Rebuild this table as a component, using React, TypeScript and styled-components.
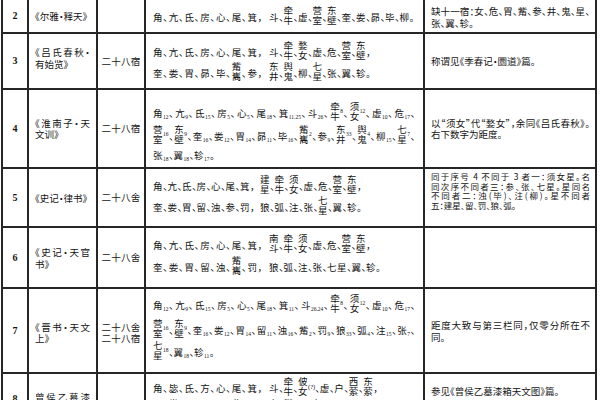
import React from 'react'
import styled, {createGlobalStyle} from 'styled-components'

const GlobalStyle = createGlobalStyle`
  html, body {
    margin: 0;
    padding: 0;
    background: #fff;
    overflow: hidden;
  }
  body {
    font-family: "Noto Sans CJK SC", "Noto Sans", sans-serif;
    color: #141414;
    font-feature-settings: "halt";
  }
`

type Txt = { t: string, j?: boolean }
type ListLineSpec = { mt?: number, left?: string, lw?: number, gap?: number, right?: string, full?: string }
type RowSpec = {
    no: string
    noPt?: number
    book: Txt[]
    bookPt?: number
    bookLh?: number
    name: string[]
    namePt?: number
    listPt: number
    lines: ListLineSpec[]
    note: Txt[]
    notePt?: number
    noteLh?: number
    noteFs?: number
}

const LEFT_A = "角、亢、氐、房、心、尾、箕，"

const rows: RowSpec[] = [
    {
        no: "2",
        book: [{t: "《尔雅·释天》"}],
        name: [],
        listPt: 4,
        lines: [
            {left: LEFT_A, right: "斗、[牵牛]、虚、[营室]、[东壁]、奎、娄、昴、毕、柳。"},
        ],
        note: [{t: "缺十一宿：女、危、胃、觜、参、井、鬼、星、", j: true}, {t: "张、翼、轸。"}],
        notePt: 6,
        noteLh: 11.5,
    },
    {
        no: "3",
        book: [{t: "《吕氏春秋·", j: true}, {t: "有始览》"}],
        bookPt: 12,
        name: ["二十八宿"],
        listPt: 5,
        lines: [
            {left: LEFT_A, right: "斗、[牵牛]、[婺女]、虚、危、[营室]、[东壁]，"},
            {mt: 3, left: "奎、娄、胃、昴、毕、[觜巂]、参，", right: "[东井]、[舆鬼]、柳、[七星]、张、翼、轸。"},
        ],
        note: [{t: "称谓见《季春记·圜道》篇。"}],
    },
    {
        no: "4",
        book: [{t: "《淮南子·天", j: true}, {t: "文训》"}],
        bookLh: 11,
        name: ["二十八宿"],
        listPt: 10,
        lines: [
            {full: "角_12、亢_9、氐_15、房_5、心_5、尾_18、箕_11.25、斗_26、[牵牛]^8、[须女]^12、虚_10、危_17、"},
            {mt: 5, full: "[营室]^16、[东壁]^9、奎_16、娄_12、胃_14、昴_11、毕_16、[觜巂]^2、参_9、[东井]^33、[舆鬼]^4、柳_15、[七星]^7、"},
            {mt: 1, right: "张_18、翼_18、轸_17。"},
        ],
        note: [{t: "以“须女”代“婺女”，余同《吕氏春秋》。", j: true}, {t: "右下数字为距度。"}],
        noteLh: 11,
    },
    {
        no: "5",
        book: [{t: "《史记·律书》"}],
        name: ["二十八舍"],
        listPt: 4,
        lines: [
            {left: LEFT_A, lw: 97, gap: 10, right: "[建星]、[牵牛]、[须女]、虚、危、[营室]、[东壁]，"},
            {mt: 3, left: "奎、娄、胃、留、浊、参、罚，", lw: 97, gap: 10, right: "狼、弧、注、张、[七星]、翼、轸。"},
        ],
        note: [
            {t: "同于序号 4 不同于 3 者一：须女星。名", j: true},
            {t: "同次序不同者三：参、张、七星。星同名", j: true},
            {t: "不同者二：浊(毕)、注(柳)。星不同者", j: true},
            {t: "五：建星、留、罚、狼、弧。"},
        ],
        notePt: 3,
        noteLh: 9.5,
        noteFs: 8.5,
    },
    {
        no: "6",
        book: [{t: "《史记·天官", j: true}, {t: "书》"}],
        name: ["二十八舍"],
        listPt: 4,
        lines: [
            {left: LEFT_A, right: "[南斗]、[牵牛]、[须女]、虚、危、[营室]、[东壁]，"},
            {mt: 4, left: "奎、娄、胃、留、浊、[觜巂]、罚，", right: "狼、弧、注、张、七星、翼、轸。"},
        ],
        note: [],
    },
    {
        no: "7",
        book: [{t: "《晋书·天文", j: true}, {t: "上》"}],
        bookPt: 33,
        bookLh: 11,
        name: ["二十八舍", "二十八宿"],
        namePt: 33,
        listPt: 3,
        lines: [
            {full: "角_12、亢_9、氐_15、房_5、心_5、尾_18、箕_11、斗_26.24、[牵牛]^8、[须女]^12、虚_10、危_17、"},
            {mt: 7, full: "[营室]^16、[东壁]^9、奎_16、娄_12、胃_14、留_11、浊_16、觜_2、罚_9、狼_33、弧_4、注_15、张_7、"},
            {mt: 4, right: "[七星]^18、翼_18、轸_11。"},
        ],
        note: [{t: "距度大致与第三栏同，仅零分所在不", j: true}, {t: "同。"}],
    },
    {
        no: "8",
        noPt: 20,
        book: [{t: "曾侯乙墓漆", j: true}, {t: "箱"}],
        bookPt: 17,
        name: [],
        listPt: 1,
        lines: [
            {left: "角、毖、氐、方、心、尾、箕，", right: "斗、[牵牛]、[佊女](?)、虚、户、[西萦]、[东萦]，"},
            {mt: 4, left: "奎、[娄女]、胃、矛、毕、[此隹]、参，", right: "[东井]、[舆鬼]、酉、[七星]、张、翼、车。"},
        ],
        note: [{t: "参见《曾侯乙墓漆箱天文图》篇。"}],
        notePt: 12,
        noteLh: 11,
    },
]

type Tok = { k: 'c' | 'pair' | 'sub' | 'sup' | 'p' | 'x', t: string }

// split a list string into items, each ending with its punctuation
function parse(s: string): Tok[][] {
    const items: Tok[][] = []
    let cur: Tok[] = []
    let i = 0
    while (i < s.length) {
        const c = s[i]
        if (c === '[') {
            const j = s.indexOf(']', i)
            cur.push({k: 'pair', t: s.slice(i + 1, j)})
            i = j + 1
        } else if (c === '_' || c === '^') {
            let j = i + 1
            while (j < s.length && /[0-9.]/.test(s[j])) j++
            cur.push({k: c === '_' ? 'sub' : 'sup', t: s.slice(i + 1, j)})
            i = j
        } else if (c === '(') {
            const j = s.indexOf(')', i)
            cur.push({k: 'x', t: s.slice(i, j + 1)})
            i = j + 1
        } else if ('、，。：'.includes(c)) {
            cur.push({k: 'p', t: c})
            items.push(cur)
            cur = []
            i++
        } else {
            cur.push({k: 'c', t: c})
            i++
        }
    }
    if (cur.length) items.push(cur)
    return items
}

const Items = ({text}: { text: string }) => (
    <>
        {parse(text).map((item, n) => (
            <Item key={n}>
                {item.map((tok, m) => {
                    if (tok.k === 'pair') return <Pair key={m}><span>{tok.t[0]}</span><span>{tok.t[1]}</span></Pair>
                    if (tok.k === 'sub') return <Sub key={m}>{tok.t}</Sub>
                    if (tok.k === 'sup') return <Sup key={m}>{tok.t}</Sup>
                    if (tok.k === 'x') return <Extra key={m}>{tok.t}</Extra>
                    if (tok.k === 'p') return <Punct key={m}>{tok.t}</Punct>
                    return <Ch key={m}>{tok.t}</Ch>
                })}
            </Item>
        ))}
    </>
)

export default function App() {
    return (
        <>
            <GlobalStyle/>
            <Sheet>
                {rows.map(r => (
                    <React.Fragment key={r.no}>
                        <NumCell $pt={r.noPt}>{r.no}</NumCell>
                        <BookCell $pt={r.bookPt}>
                            {r.book.map((b, i) => <TextLine key={i} $j={b.j} $lh={r.bookLh ?? 12}>{b.t}</TextLine>)}
                        </BookCell>
                        <NameCell $pt={r.namePt}>
                            {r.name.map((n, i) => <div key={i}>{n}</div>)}
                        </NameCell>
                        <ListCell $pt={r.listPt}>
                            {r.lines.map((l, i) => (
                                <ListLine key={i} $mt={l.mt}>
                                    {l.left && <Group $w={l.lw ?? 109} $gap={l.gap ?? 7}><Items text={l.left}/></Group>}
                                    {l.right && <Group><Items text={l.right}/></Group>}
                                    {l.full && <Group $full><Items text={l.full}/></Group>}
                                </ListLine>
                            ))}
                        </ListCell>
                        <NoteCell $pt={r.notePt} $fs={r.noteFs ?? 9.5}>
                            {r.note.map((n, i) => <TextLine key={i} $j={n.j} $lh={r.noteLh ?? 12}>{n.t}</TextLine>)}
                        </NoteCell>
                    </React.Fragment>
                ))}
            </Sheet>
        </>
    )
}

const line = '#262626'

const Sheet = styled.div`
  display: grid;
  grid-template-columns: 26px 69px 48px 279px 172px;
  grid-template-rows: 34px 56px 79px 59px 61px 85px 70px;
  width: max-content;
  height: 400px;
  overflow: hidden;
  margin-left: 1px;
  border-left: 2px solid ${line};
`

const Cell = styled.div<{ $pt?: number }>`
  box-sizing: border-box;
  display: flex;
  flex-direction: column;
  justify-content: ${({$pt}) => $pt === undefined ? 'center' : 'flex-start'};
  padding-top: ${({$pt}) => $pt ?? 0}px;
  border-right: 2px solid ${line};
  border-bottom: 2px solid ${line};
  overflow: hidden;
`

const NumCell = styled(Cell)`
  align-items: center;
  font-family: "Liberation Serif", serif;
  font-weight: 700;
  font-size: 10px;
  line-height: 10px;
`

const BookCell = styled(Cell)`
  padding-left: 6px;
  padding-right: 6px;
  font-size: 9.5px;
`

const NameCell = styled(Cell)`
  align-items: center;
  font-size: 9.5px;
  line-height: 11px;
  letter-spacing: 0.3px;
`

const ListCell = styled(Cell)`
  padding-left: 7px;
  padding-right: 8px;
`

const NoteCell = styled(Cell)<{ $fs: number }>`
  padding-left: 6px;
  padding-right: 5px;
  font-size: ${({$fs}) => $fs}px;
`

const TextLine = styled.div<{ $j?: boolean, $lh: number }>`
  line-height: ${({$lh}) => $lh}px;
  text-align: ${({$j}) => $j ? 'justify' : 'left'};
  text-align-last: ${({$j}) => $j ? 'justify' : 'auto'};
`

const ListLine = styled.div<{ $mt?: number }>`
  display: flex;
  align-items: flex-end;
  height: 18px;
  margin-top: ${({$mt}) => $mt ?? 0}px;
  flex: none;
`

const Group = styled.div<{ $w?: number, $gap?: number, $full?: boolean }>`
  display: flex;
  align-items: flex-end;
  height: 100%;
  justify-content: ${({$w, $full}) => $w || $full ? 'space-between' : 'flex-start'};
  ${({$w, $gap}) => $w ? `width: ${$w}px; flex: none; margin-right: ${$gap}px;` : ''}
  ${({$full}) => $full ? 'flex: 1;' : ''}
`

const Item = styled.span`
  display: flex;
  align-items: flex-end;
`

const Ch = styled.span`
  display: block;
  width: 10px;
  font-size: 9.5px;
  line-height: 10px;
`

const Pair = styled.span`
  display: flex;
  flex-direction: column;
  width: 10px;
  font-size: 9.5px;
  line-height: 10px;
  margin-bottom: -3px;
`

const Punct = styled.span`
  display: block;
  width: 4.5px;
  font-size: 9.5px;
  line-height: 10px;
  white-space: nowrap;
`

const Sub = styled.span`
  display: block;
  font-family: "Liberation Serif", serif;
  font-size: 5.5px;
  line-height: 6px;
  margin: 0 0.5px -2px 0;
`

const Sup = styled.span`
  display: block;
  font-family: "Liberation Serif", serif;
  font-size: 5.5px;
  line-height: 6px;
  margin: 0 0.5px 4px 0;
`

const Extra = styled.span`
  display: block;
  font-family: "Liberation Serif", serif;
  font-size: 6.5px;
  line-height: 7px;
  margin-bottom: 3px;
  white-space: nowrap;
`
